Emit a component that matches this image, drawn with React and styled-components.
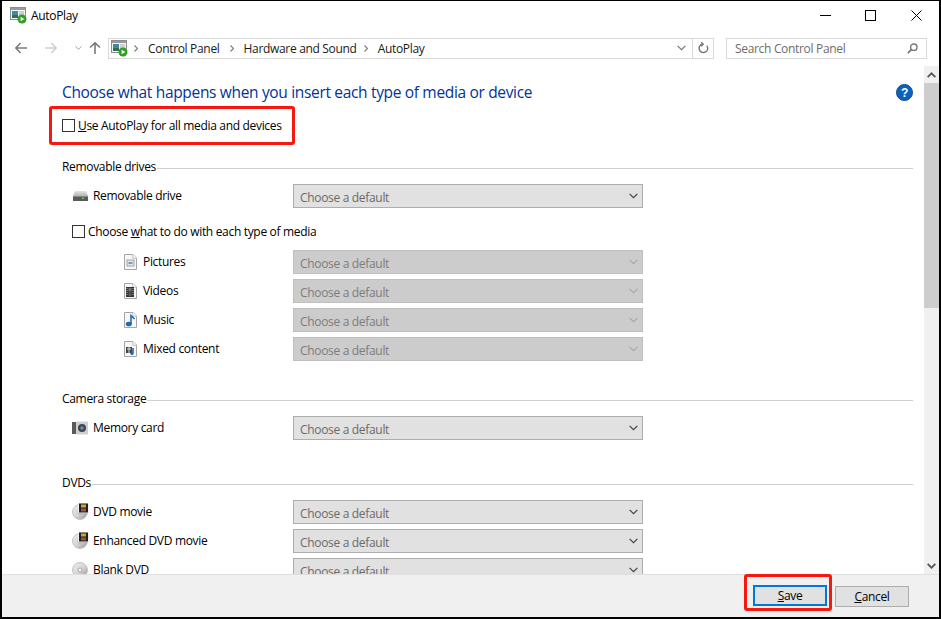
import React from 'react'
import styled, { createGlobalStyle } from 'styled-components'

const Global = createGlobalStyle`
	html, body {
		margin: 0;
		padding: 0;
		background: #000;
	}
	body {
		font-family: 'Open Sans', 'Noto Sans', sans-serif;
		font-size: 12px;
		letter-spacing: -0.32px;
		color: #000;
	}
`

const Window = styled.div`
	width: 941px;
	height: 619px;
	box-sizing: border-box;
	border: solid #000;
	border-width: 1px 2px 2px 2px;
	background: #fff;
	display: flex;
	flex-direction: column;
	overflow: hidden;
`

const TitleBar = styled.div`
	height: 29px;
	flex: none;
	display: flex;
	align-items: center;
	padding-left: 8px;
`

const Title = styled.span`
	flex: 1;
	margin-left: 4px;
`

const WinButton = styled.div`
	width: 45.5px;
	height: 29px;
	display: flex;
	align-items: center;
	justify-content: center;
`

const NavBar = styled.div`
	height: 36px;
	flex: none;
	display: flex;
	align-items: center;
`

const NavIcons = styled.div`
	width: 106px;
	height: 20px;
	flex: none;
	display: flex;
	align-items: center;
`

const NavSlot = styled.span`
	display: flex;
	margin-left: ${p => p.$left}px;
`

const AddressBar = styled.div`
	width: 606px;
	height: 21px;
	box-sizing: border-box;
	border: 1px solid #d9d9d9;
	display: flex;
	align-items: center;
	padding-left: 2px;
`

const Crumbs = styled.div`
	flex: 1;
	display: flex;
	align-items: center;
	margin-left: 6px;
`

const Crumb = styled.span`
	color: #1a1a1a;
	margin-right: ${p => p.$after || 0}px;
`

const CrumbSep = styled.span`
	display: flex;
	width: ${p => p.$w}px;
	flex: none;
`

const AddrEnd = styled.div`
	width: 21px;
	height: 100%;
	box-sizing: border-box;
	border-left: ${p => (p.$divided ? '1px solid #d9d9d9' : 'none')};
	display: flex;
	align-items: center;
	justify-content: center;
`

const SearchBox = styled.div`
	width: 201px;
	height: 21px;
	margin-left: 12px;
	box-sizing: border-box;
	border: 1px solid #d9d9d9;
	display: flex;
	align-items: center;
	justify-content: space-between;
	padding: 0 8px;
	color: #6d6d6d;
`

const Body = styled.div`
	flex: 1;
	min-height: 0;
	display: flex;
	overflow: hidden;
`

const Content = styled.div`
	flex: 1;
	padding: 15px 11px 0 60px;
	overflow: hidden;
`

const HeadRow = styled.div`
	display: flex;
	align-items: center;
	justify-content: space-between;
	height: 22px;
`

const Heading = styled.h1`
	margin: 0;
	font-size: 15.5px;
	font-weight: 400;
	color: #003399;
	letter-spacing: -0.33px;
	line-height: 22px;
`

const Highlight = styled.div`
	width: 246px;
	height: 39px;
	box-sizing: border-box;
	margin: 3px 0 0 -13px;
	padding-left: 10px;
	border: 3px solid #f8170f;
	border-radius: 3px;
	display: flex;
	align-items: center;
`

const Check = styled.label`
	display: flex;
	align-items: center;
	gap: 3px;
	height: 16px;
	margin-left: ${p => p.$left || 0}px;
	margin-top: ${p => p.$top || 0}px;
`

const Box = styled.span`
	width: 13px;
	height: 13px;
	box-sizing: border-box;
	border: 1px solid #333;
	background: #fff;
	flex: none;
`

const Key = styled.span`
	text-decoration: underline;
`

const Section = styled.div`
	display: flex;
	align-items: center;
	gap: 1px;
	height: 16px;
	box-sizing: border-box;
	padding-bottom: 2px;
	margin-top: ${p => p.$top}px;
	margin-bottom: 9px;
	&::after {
		content: '';
		flex: 1;
		height: 1px;
		background: #d0d0d0;
		margin-top: 4px;
	}
`

const Rows = styled.div`
	display: flex;
	flex-direction: column;
	gap: 5px;
	margin-top: ${p => p.$top || 0}px;
`

const Row = styled.div`
	width: 581px;
	height: 24px;
	box-sizing: border-box;
	padding-left: ${p => p.$indent || 0}px;
	display: flex;
	align-items: center;
`

const RowIcon = styled.span`
	width: ${p => p.$w}px;
	flex: none;
	display: flex;
	margin-top: -1px;
`

const RowLabel = styled.span`
	flex: 1;
	margin-top: -2px;
`

const Select = styled.div`
	width: 350px;
	height: 24px;
	flex: none;
	box-sizing: border-box;
	border: 1px solid ${p => (p.$disabled ? '#bfbfbf' : '#adadad')};
	background: ${p => (p.$disabled ? '#cccccc' : '#e1e1e1')};
	color: ${p => (p.$disabled ? '#7c7c7c' : '#6a6a6a')};
	display: flex;
	align-items: center;
	justify-content: space-between;
	padding: 0 4px 0 6px;
`

const SelectText = styled.span`
	margin-top: 2px;
`

const Scrollbar = styled.div`
	width: 15px;
	flex: none;
	background: #f0f0f0;
	display: flex;
	flex-direction: column;
	align-items: center;
`

const ScrollArrow = styled.div`
	height: 17px;
	width: 100%;
	display: flex;
	align-items: center;
	justify-content: center;
	flex: none;
`

const ScrollThumb = styled.div`
	width: 100%;
	height: 225px;
	flex: none;
	background: #cdcdcd;
`

const ScrollGap = styled.div`
	flex: 1;
`

const Footer = styled.div`
	height: 43px;
	flex: none;
	box-sizing: border-box;
	background: #f0f0f0;
	border-top: 1px solid #dfdfdf;
	display: flex;
	justify-content: flex-end;
	align-items: flex-start;
	padding-right: 30px;
`

const SaveHighlight = styled.div`
	width: 88px;
	height: 37px;
	box-sizing: border-box;
	margin-top: -1px;
	border: 3px solid #f8170f;
	border-radius: 3px;
	display: flex;
	justify-content: flex-end;
	align-items: flex-end;
	padding: 0 2px 2px 0;
`

const Button = styled.div`
	width: 74px;
	height: 21px;
	box-sizing: border-box;
	background: #e1e1e1;
	border: ${p => (p.$primary ? '2px solid #0078d7' : '1px solid #adadad')};
	display: flex;
	align-items: center;
	justify-content: center;
`

const CancelWrap = styled.div`
	margin: 11px 0 0 3px;
`

const Arrow = ({ dir = 'left', color = '#6d6d6d' }) => (
	<svg width="12" height="12" viewBox="0 0 12 12" fill="none" stroke={color} strokeWidth="1.6"
		style={{ transform: dir === 'right' ? 'rotate(180deg)' : dir === 'up' ? 'rotate(90deg)' : 'none', flex: 'none' }}>
		<path d="M0.8 6H12M5.5 1L0.8 6L5.5 11" />
	</svg>
)

const Chevron = ({ color = '#555', w = 9, sw = 1.2, up }) => (
	<svg width={w} height="6" viewBox="0 0 9 6" fill="none" stroke={color} strokeWidth={sw}
		style={{ transform: up ? 'rotate(180deg)' : 'none', flex: 'none' }}>
		<path d="M0.6 0.8L4.5 4.7L8.4 0.8" />
	</svg>
)

const SepArrow = () => (
	<svg width="4" height="7" viewBox="0 0 4 7" fill="none" stroke="#777" strokeWidth="1.1">
		<path d="M0.5 0.5L3.5 3.5L0.5 6.5" />
	</svg>
)

const AppIcon = () => (
	<svg width="17" height="17" viewBox="0 0 17 17" style={{ flex: 'none' }}>
		<rect x="0.5" y="0.5" width="15" height="12" fill="#f4f4f4" stroke="#8d8d8d" />
		<rect x="1" y="1" width="14" height="2" fill="#9a9a9a" />
		<rect x="2" y="4" width="6" height="7" fill="#3f8a9e" />
		<rect x="2" y="8" width="6" height="3" fill="#2f6f57" />
		<path d="M9 5h5M9 7h5M9 9h3" stroke="#a9a9a9" />
		<circle cx="12" cy="12" r="4.5" fill="#2f9e22" />
		<path d="M10.6 9.8L14.4 12L10.6 14.2Z" fill="#fff" />
	</svg>
)

const Refresh = () => (
	<svg width="11" height="12" viewBox="0 0 11 12" fill="none" stroke="#777" strokeWidth="1.4">
		<path d="M4 2.2A4.3 4.3 0 1 0 8.8 3.6" />
		<path d="M3.2 0.2L5.2 2.2L3.2 4.2" />
	</svg>
)

const SearchIcon = () => (
	<svg width="11" height="11" viewBox="0 0 11 11" fill="none" stroke="#777">
		<circle cx="6.8" cy="4.2" r="3.2" strokeWidth="1.4" />
		<path d="M4.4 6.6L0.8 10.2" strokeWidth="1.8" />
	</svg>
)

const HelpIcon = () => (
	<svg width="17" height="17" viewBox="0 0 17 17" style={{ flex: 'none' }}>
		<circle cx="8.5" cy="8.5" r="8" fill="#0a62bd" stroke="#0e4c94" />
		<text x="8.5" y="13" textAnchor="middle" fontSize="12" fontWeight="700" fill="#fff" fontFamily="'Liberation Sans', sans-serif">?</text>
	</svg>
)

const DriveIcon = () => (
	<svg width="15" height="10" viewBox="0 0 15 10">
		<defs>
			<linearGradient id="driveTop" x1="0" y1="0" x2="0" y2="1">
				<stop offset="0" stopColor="#e4e4e4" />
				<stop offset="1" stopColor="#b4b4b4" />
			</linearGradient>
		</defs>
		<path d="M2 0h11l2 5H0Z" fill="url(#driveTop)" />
		<rect x="0" y="5" width="15" height="5" fill="#5a5a5a" />
		<rect x="0" y="5" width="15" height="1" fill="#8a8a8a" />
		<rect x="9" y="6.5" width="2" height="1.5" fill="#3fe05a" />
	</svg>
)

const DocShell = ({ children }) => (
	<svg width="13" height="16" viewBox="0 0 13 16">
		<path d="M0.5 0.5H9L12.5 4V15.5H0.5Z" fill="#f7f7f7" stroke="#a6a6a6" />
		<path d="M8.8 0.5V4.2H12.5" fill="#fff" stroke="#bdbdbd" />
		{children}
	</svg>
)

const PictureIcon = () => (
	<DocShell>
		<rect x="3" y="6" width="7" height="6" fill="#e6e6e6" stroke="#a3a3a3" />
		<rect x="4.5" y="8" width="4" height="2" fill="#6f9fbf" />
	</DocShell>
)

const VideoIcon = () => (
	<DocShell>
		<rect x="2" y="4" width="8" height="10" fill="#333" />
		<path d="M3 5v8M9 5v8" stroke="#bbb" strokeDasharray="1 1" />
		<rect x="4.5" y="5" width="3" height="3.5" fill="#7a7a7a" />
		<rect x="4.5" y="9.5" width="3" height="3.5" fill="#5b5b5b" />
	</DocShell>
)

const MusicIcon = () => (
	<DocShell>
		<ellipse cx="4.8" cy="12" rx="3" ry="2.3" fill="#1f66b5" />
		<path d="M7 12V3.5L10.5 7" fill="none" stroke="#1f66b5" strokeWidth="1.5" />
	</DocShell>
)

const MixedIcon = () => (
	<DocShell>
		<rect x="2" y="6" width="6" height="6" fill="#444" />
		<path d="M3 8h4M5 6v6" stroke="#ddd" />
		<path d="M9 7v5" stroke="#1f66b5" strokeWidth="1.6" />
		<circle cx="8" cy="12.5" r="1.6" fill="#1f66b5" />
	</DocShell>
)

const CameraIcon = () => (
	<svg width="16" height="14" viewBox="0 0 16 14">
		<rect x="0" y="1" width="5" height="12" fill="#5a5a5a" />
		<rect x="4" y="0.5" width="12" height="13" rx="1" fill="#cfcfcf" />
		<circle cx="10" cy="7" r="4" fill="#3a4650" />
		<circle cx="10" cy="7" r="1.8" fill="#6f8ea3" />
	</svg>
)

const DiscIcon = ({ film }) => (
	<svg width="17" height="17" viewBox="0 0 17 17">
		<defs>
			<linearGradient id="disc" x1="0" y1="0" x2="1" y2="1">
				<stop offset="0" stopColor="#f0f0f0" />
				<stop offset="0.55" stopColor="#d2d2d2" />
				<stop offset="1" stopColor="#8f8f8f" />
			</linearGradient>
		</defs>
		<circle cx="8" cy="9" r="7.5" fill="url(#disc)" stroke="#c4c4c4" />
		<circle cx="8" cy="9" r="2" fill="#f4f4f4" stroke="#a8a8a8" />
		{film && (
			<g>
				<rect x="6" y="0" width="11" height="10" fill="#f2f2f2" />
				<rect x="7" y="0.5" width="9" height="9" fill="#1f1f1f" />
				<rect x="9" y="1.5" width="5" height="3" fill="#c9a83a" />
				<rect x="9" y="5.5" width="5" height="3" fill="#a04f3a" />
			</g>
		)}
	</svg>
)

const mediaRows = [
	{ label: 'Pictures', icon: <PictureIcon /> },
	{ label: 'Videos', icon: <VideoIcon /> },
	{ label: 'Music', icon: <MusicIcon /> },
	{ label: 'Mixed content', icon: <MixedIcon /> },
]

const dvdRows = [
	{ label: 'DVD movie', film: true },
	{ label: 'Enhanced DVD movie', film: true },
	{ label: 'Blank DVD', film: false },
]

const DefaultSelect = ({ disabled }) => (
	<Select $disabled={disabled}>
		<SelectText>Choose a default</SelectText>
		<Chevron color={disabled ? '#a9a9a9' : '#444'} />
	</Select>
)

export default function App() {
	return (
		<>
			<Global />
			<Window>
				<TitleBar>
					<AppIcon />
					<Title>AutoPlay</Title>
					<WinButton>
						<svg width="11" height="1"><rect width="11" height="1" fill="#000" /></svg>
					</WinButton>
					<WinButton>
						<svg width="11" height="11" fill="none" stroke="#000"><rect x="0.5" y="0.5" width="10" height="10" /></svg>
					</WinButton>
					<WinButton>
						<svg width="11" height="11" fill="none" stroke="#000"><path d="M0.5 0.5L10.5 10.5M10.5 0.5L0.5 10.5" /></svg>
					</WinButton>
				</TitleBar>
				<NavBar>
					<NavIcons>
						<NavSlot $left={13}><Arrow color="#7a7a7a" /></NavSlot>
						<NavSlot $left={18}><Arrow dir="right" color="#d0d0d0" /></NavSlot>
						<NavSlot $left={18}><Chevron color="#9a9a9a" w={7} /></NavSlot>
						<NavSlot $left={7}><Arrow dir="up" color="#7a7a7a" /></NavSlot>
					</NavIcons>
					<AddressBar>
						<AppIcon />
						<Crumbs>
							<CrumbSep $w={14}><SepArrow /></CrumbSep>
							<Crumb $after={10}>Control Panel</Crumb>
							<CrumbSep $w={14}><SepArrow /></CrumbSep>
							<Crumb $after={7}>Hardware and Sound</Crumb>
							<CrumbSep $w={14}><SepArrow /></CrumbSep>
							<Crumb>AutoPlay</Crumb>
						</Crumbs>
						<AddrEnd><Chevron color="#777" /></AddrEnd>
						<AddrEnd $divided><Refresh /></AddrEnd>
					</AddressBar>
					<SearchBox>
						Search Control Panel
						<SearchIcon />
					</SearchBox>
				</NavBar>
				<Body>
					<Content>
						<HeadRow>
							<Heading>Choose what happens when you insert each type of media or device</Heading>
							<HelpIcon />
						</HeadRow>
						<Highlight>
							<Check>
								<Box />
								<span><Key>U</Key>se AutoPlay for all media and devices</span>
							</Check>
						</Highlight>

						<Section $top={14}>Removable drives</Section>
						<Rows>
							<Row $indent={11}>
								<RowIcon $w={20}><DriveIcon /></RowIcon>
								<RowLabel>Removable drive</RowLabel>
								<DefaultSelect />
							</Row>
						</Rows>
						<Check $left={10} $top={15}>
							<Box />
							<span>Choose <Key>w</Key>hat to do with each type of media</span>
						</Check>
						<Rows $top={11}>
							{mediaRows.map(r => (
								<Row key={r.label} $indent={62}>
									<RowIcon $w={19}>{r.icon}</RowIcon>
									<RowLabel>{r.label}</RowLabel>
									<DefaultSelect disabled />
								</Row>
							))}
						</Rows>

						<Section $top={30}>Camera storage</Section>
						<Rows>
							<Row $indent={10}>
								<RowIcon $w={21}><CameraIcon /></RowIcon>
								<RowLabel>Memory card</RowLabel>
								<DefaultSelect />
							</Row>
						</Rows>

						<Section $top={35}>DVDs</Section>
						<Rows>
							{dvdRows.map(r => (
								<Row key={r.label} $indent={10}>
									<RowIcon $w={21}><DiscIcon film={r.film} /></RowIcon>
									<RowLabel>{r.label}</RowLabel>
									<DefaultSelect />
								</Row>
							))}
						</Rows>
					</Content>
					<Scrollbar>
						<ScrollArrow><Chevron color="#555" sw={1.8} up /></ScrollArrow>
						<ScrollThumb />
						<ScrollGap />
						<ScrollArrow><Chevron color="#555" sw={1.8} /></ScrollArrow>
					</Scrollbar>
				</Body>
				<Footer>
					<SaveHighlight>
						<Button $primary><span><Key>S</Key>ave</span></Button>
					</SaveHighlight>
					<CancelWrap>
						<Button><span><Key>C</Key>ancel</span></Button>
					</CancelWrap>
				</Footer>
			</Window>
		</>
	)
}
